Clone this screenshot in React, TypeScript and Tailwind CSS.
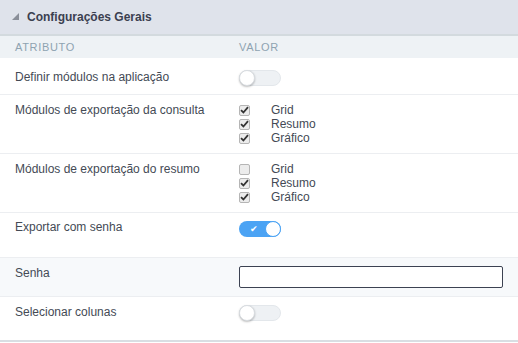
import React from "react";

const font = { fontFamily: '"Liberation Sans", Arial, sans-serif' };

function Toggle({ on }: { on?: boolean }) {
  if (on) {
    return (
      <div className="relative w-[42px] h-[16px] rounded-full bg-[#4ba3f4]">
        <span className="absolute left-[11px] top-[1px] text-white text-[9px] leading-[14px]">✔</span>
        <div className="absolute right-0 top-0 w-[16px] h-[16px] rounded-full bg-white border border-[#4ba3f4]" />
      </div>
    );
  }
  return (
    <div className="relative w-[42px] h-[16px] rounded-full bg-[#eef1f4] border border-[#e3e7eb]">
      <div className="absolute left-[-1px] top-[-1px] w-[16px] h-[16px] rounded-full bg-white border border-[#d8dce0] shadow-[0_1px_2px_rgba(0,0,0,0.25)]" />
    </div>
  );
}

function Check({ checked }: { checked?: boolean }) {
  return (
    <div className="w-[11px] h-[11px] rounded-[2px] border border-[#b5b5b5] bg-[#ececec] flex items-center justify-center">
      {checked && (
        <svg width="9" height="8" viewBox="0 0 9 8">
          <path d="M1 4.2 L3.4 6.5 L8 1.2" stroke="#333" strokeWidth="1.8" fill="none" />
        </svg>
      )}
    </div>
  );
}

function CheckList({ items }: { items: [string, boolean][] }) {
  return (
    <div className="flex flex-col">
      {items.map(([l, c]) => (
        <div key={l} className="flex items-center h-[14px]">
          <Check checked={c} />
          <span className="ml-[21px] text-[12px] text-[#444a55] leading-[14px]">{l}</span>
        </div>
      ))}
    </div>
  );
}

function Row({
  label,
  children,
  className = "",
}: {
  label: string;
  children: React.ReactNode;
  className?: string;
}) {
  return (
    <div className={`flex border-b border-[#eceef1] ${className}`}>
      <div className="w-[239px] pl-[15px] text-[12px] text-[#444a55] leading-[14px]">{label}</div>
      <div className="flex-1">{children}</div>
    </div>
  );
}

export default function App() {
  return (
    <div className="w-[518px] h-[343px] bg-white" style={font}>
      <div className="h-[36px] bg-[#dfe3eb] flex items-center pb-[1px] border-b-2 border-[#d3dade]">
        <svg width="8" height="8" viewBox="0 0 8 8" className="ml-[12px] mt-[1px]">
          <polygon points="7,0 7,7 0,7" fill="#8a8f99" />
        </svg>
        <span className="ml-[7px] text-[12px] font-bold text-[#3b4050]">Configurações Gerais</span>
      </div>
      <div className="h-[22px] bg-[#eef2f5] flex items-center pt-[1px] text-[11px] tracking-[0.06em] text-[#8ea3b1]">
        <div className="w-[239px] pl-[15px]">ATRIBUTO</div>
        <div>VALOR</div>
      </div>
      <Row label="Definir módulos na aplicação" className="h-[37px] pt-[12px]">
        <Toggle />
      </Row>
      <Row label="Módulos de exportação da consulta" className="h-[59px] pt-[8px]">
        <CheckList items={[["Grid", true], ["Resumo", true], ["Gráfico", true]]} />
      </Row>
      <Row label="Módulos de exportação do resumo" className="h-[59px] pt-[8px]">
        <CheckList items={[["Grid", false], ["Resumo", true], ["Gráfico", true]]} />
      </Row>
      <Row label="Exportar com senha" className="h-[45px] pt-[7px]">
        <div className="mt-[1px]">
          <Toggle on />
        </div>
      </Row>
      <Row label="Senha" className="h-[39px] pt-[8px] bg-[#f7f9fb]">
        <div className="w-[264px] h-[22px] border border-[#3c4252] rounded-[2px] bg-white" />
      </Row>
      <div className="flex h-[45px] pt-[8px] border-b-2 border-[#d9dee3]">
        <div className="w-[239px] pl-[15px] text-[12px] text-[#444a55] leading-[14px]">Selecionar colunas</div>
        <div>
          <Toggle />
        </div>
      </div>
    </div>
  );
}
